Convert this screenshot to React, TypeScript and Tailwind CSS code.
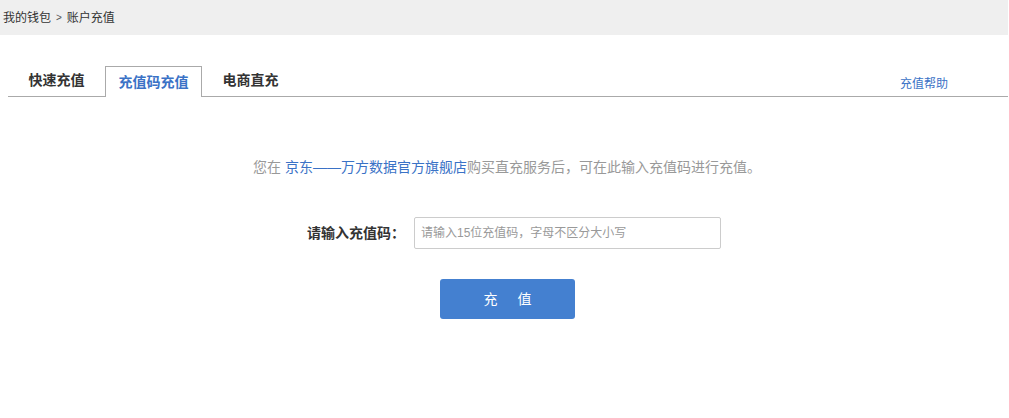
import React from 'react';

const font = { fontFamily: '"Liberation Sans", "Noto Sans CJK SC", sans-serif' };

export default function App() {
  return (
    <div className="w-[1008px] h-[418px] bg-white text-[#333]" style={font}>
      {/* breadcrumb */}
      <div className="h-[35px] bg-[#efefef] flex items-center pl-[3px] text-[12px] text-[#333]">
        <span>我的钱包</span>
        <span className="mx-[5px] text-[10px] text-[#555]">&gt;</span>
        <span>账户充值</span>
      </div>

      {/* tabs */}
      <div className="mt-[31px] ml-[8px] h-[31px] border-b border-[#aaa] flex items-end">
        <div className="w-[97px] h-[31px] flex items-center justify-center text-[14px] font-bold text-[#333]">快速充值</div>
        <div className="w-[97px] h-[31px] -mb-px bg-white border border-b-0 border-[#aaa] flex items-center justify-center text-[14px] font-bold text-[#3a72c6]">充值码充值</div>
        <div className="w-[97px] h-[31px] flex items-center justify-center text-[14px] font-bold text-[#333]">电商直充</div>
        <a className="ml-auto mr-[60px] h-[31px] flex items-center pt-[6px] text-[12px] text-[#3a72c6]">充值帮助</a>
      </div>

      {/* notice */}
      <p className="mt-[60px] text-center text-[14px] text-[#999] pl-[6px]">
        您在 <a className="text-[#3a72c6]">京东——万方数据官方旗舰店</a>购买直充服务后，可在此输入充值码进行充值。
      </p>

      {/* input row */}
      <div className="mt-[39px] flex items-center">
        <label className="w-[405px] text-right text-[14px] font-bold text-[#333]">请输入充值码：</label>
        <div className="ml-[9px] w-[307px] h-[32px] border border-[#ccc] rounded-[2px] flex items-center pl-[6px] text-[12px] text-[#999]">
          请输入15位充值码，字母不区分大小写
        </div>
      </div>

      {/* submit */}
      <div className="mt-[30px] flex justify-center pl-[7px]">
        <button className="w-[135px] h-[40px] rounded-[3px] bg-[#4480d0] text-white text-[14px] tracking-[20px] pl-[20px]">充值</button>
      </div>
    </div>
  );
}
